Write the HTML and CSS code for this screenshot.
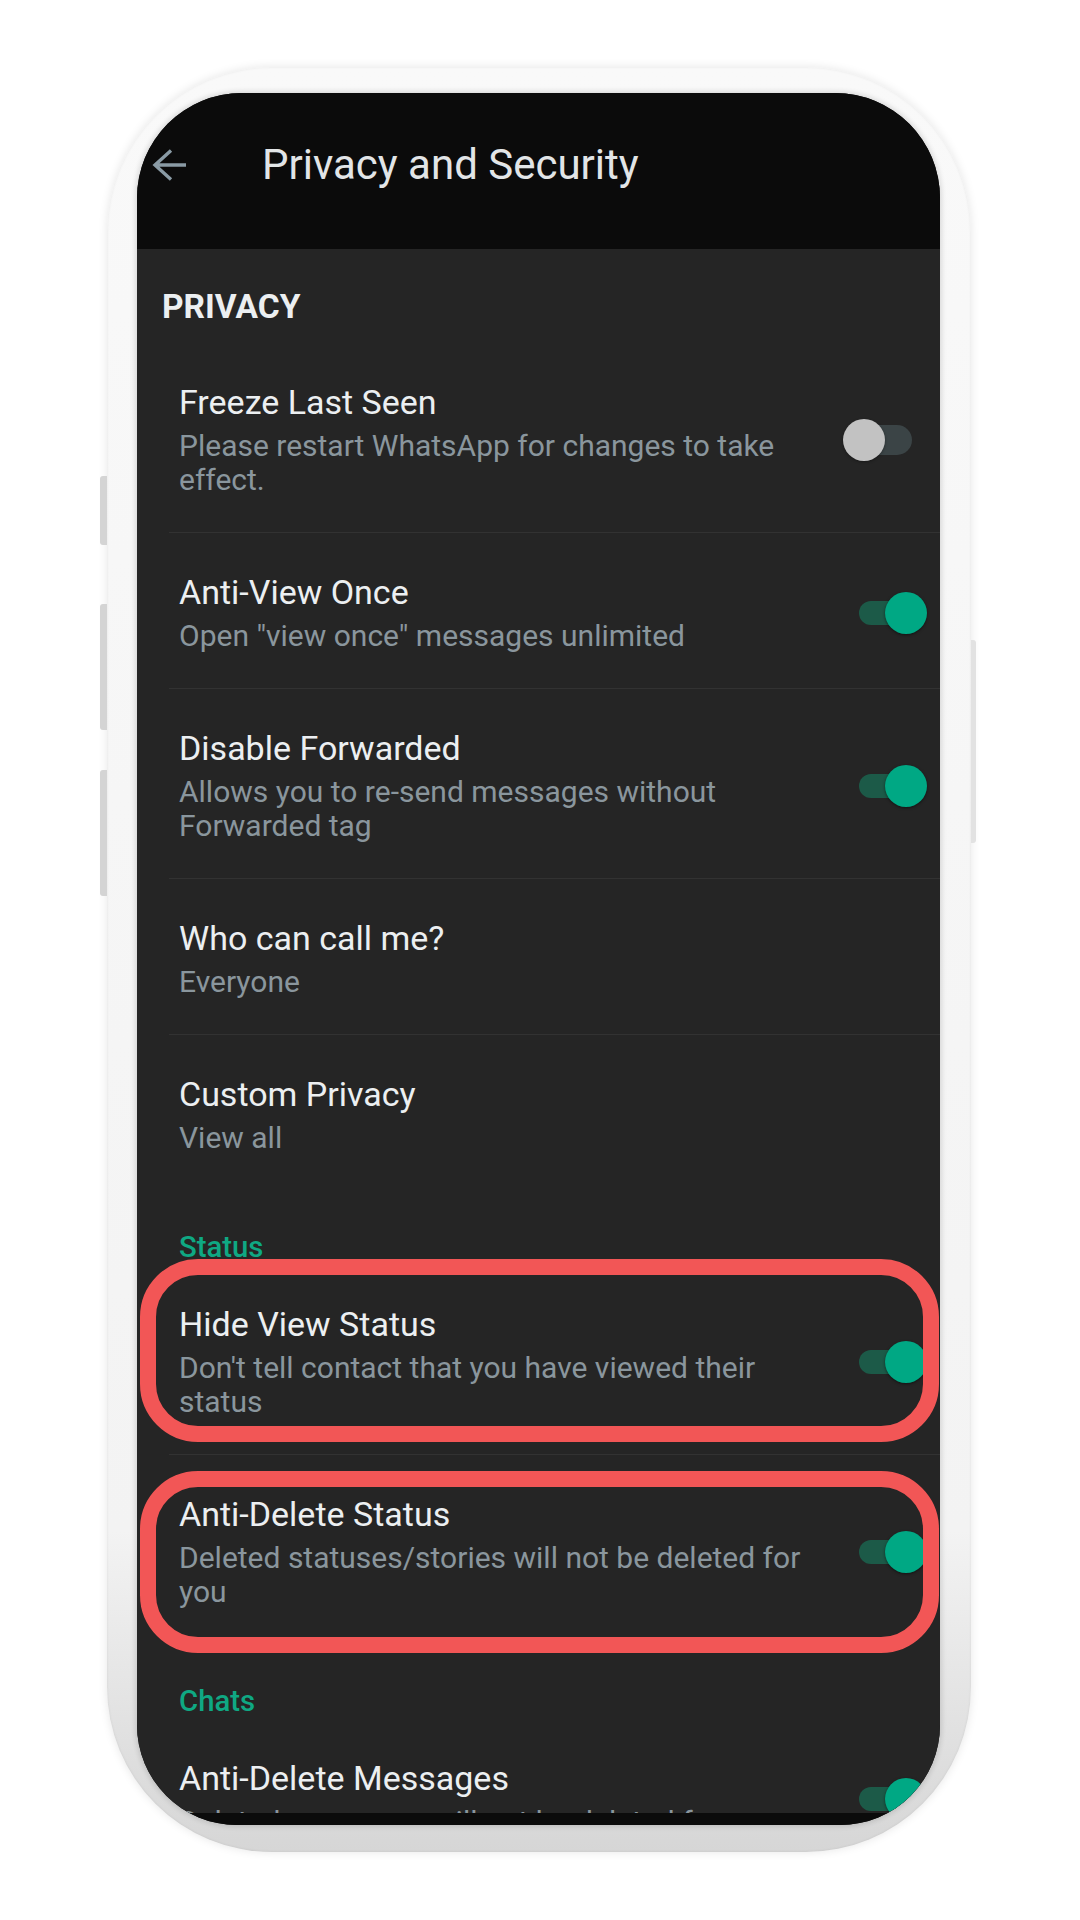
FILE: index.html
```html
<!DOCTYPE html>
<html lang="en">
<head>
<meta charset="utf-8">
<title>Privacy and Security</title>
<link rel="stylesheet" href="styles.css">
</head>
<body>
<div class="stage">
  <div class="phone">
    <span class="key key-l1"></span>
    <span class="key key-l2"></span>
    <span class="key key-l3"></span>
    <span class="key key-r1"></span>
    <div class="screen">
      <header class="appbar">
        <div class="bar">
          <svg class="back" viewBox="0 0 36 32" aria-hidden="true">
            <path d="M34 16H3 M19 1.5L3 16L19 30.5" fill="none" stroke="#8a9ba5" stroke-width="3.4" stroke-linecap="butt" stroke-linejoin="miter"/>
          </svg>
          <h1 class="title">Privacy and Security</h1>
        </div>
      </header>
      <main class="content">
        <h2 class="cat">PRIVACY</h2>
        <div class="list">
          <div class="row">
            <div class="text">
              <div class="t">Freeze Last Seen</div>
              <div class="s">Please restart WhatsApp for changes to take effect.</div>
            </div>
            <div class="switch off"><span class="track"></span><span class="thumb"></span></div>
          </div>
          <div class="row">
            <div class="text">
              <div class="t">Anti-View Once</div>
              <div class="s">Open "view once" messages unlimited</div>
            </div>
            <div class="switch on"><span class="track"></span><span class="thumb"></span></div>
          </div>
          <div class="row">
            <div class="text">
              <div class="t">Disable Forwarded</div>
              <div class="s">Allows you to re-send messages without Forwarded tag</div>
            </div>
            <div class="switch on"><span class="track"></span><span class="thumb"></span></div>
          </div>
          <div class="row">
            <div class="text">
              <div class="t">Who can call me?</div>
              <div class="s">Everyone</div>
            </div>
          </div>
          <div class="row last">
            <div class="text">
              <div class="t">Custom Privacy</div>
              <div class="s">View all</div>
            </div>
          </div>
        </div>

        <h3 class="sec">Status</h3>
        <div class="list">
          <div class="row">
            <div class="text">
              <div class="t">Hide View Status</div>
              <div class="s">Don't tell contact that you have viewed their status</div>
            </div>
            <div class="switch on"><span class="track"></span><span class="thumb"></span></div>
            <span class="mark mark-a"></span>
          </div>
          <div class="row last">
            <div class="text">
              <div class="t">Anti-Delete Status</div>
              <div class="s">Deleted statuses/stories will not be deleted for you</div>
            </div>
            <div class="switch on"><span class="track"></span><span class="thumb"></span></div>
            <span class="mark mark-b"></span>
          </div>
        </div>

        <h3 class="sec">Chats</h3>
        <div class="list">
          <div class="row last">
            <div class="text">
              <div class="t">Anti-Delete Messages</div>
              <div class="s">Deleted messages will not be deleted for you</div>
            </div>
            <div class="switch on"><span class="track"></span><span class="thumb"></span></div>
          </div>
        </div>
      </main>
      <div class="navbar"></div>
    </div>
  </div>
</div>
</body>
</html>
```
FILE: styles.css
```css
html, body {
  margin: 0;
  padding: 0;
  background: #ffffff;
}

body {
  font-family: Roboto, "Noto Sans", "Liberation Sans", sans-serif;
}

.stage {
  width: 1080px;
  height: 1920px;
  box-sizing: border-box;
  padding: 67px 0 0 107px;
}

.phone {
  position: relative;
  width: 864px;
  height: 1785px;
  box-sizing: border-box;
  padding: 26px 31px 27px 30px;
  border-radius: 165px;
  background: linear-gradient(180deg, #f9f9f9 0%, #f3f3f3 82%, #d6d6d6 100%);
  box-shadow: 0 0 10px rgba(0, 0, 0, 0.10), inset 0 0 3px rgba(0, 0, 0, 0.08);
}

.key {
  position: absolute;
  display: block;
  background: #d4d4d4;
}

.key-l1 { left: -7px; top: 409px; width: 7px; height: 69px; border-radius: 3px 0 0 3px; }
.key-l2 { left: -7px; top: 537px; width: 7px; height: 126px; border-radius: 3px 0 0 3px; }
.key-l3 { left: -7px; top: 703px; width: 7px; height: 126px; border-radius: 3px 0 0 3px; }
.key-r1 { right: -5px; top: 573px; width: 5px; height: 203px; border-radius: 0 3px 3px 0; background: #e2e2e2; }

.screen {
  height: 100%;
  display: flex;
  flex-direction: column;
  overflow: hidden;
  border-radius: 105px 105px 100px 100px;
  background: #0b0b0b;
  box-shadow: 0 0 5px 2px rgba(0, 0, 0, 0.12);
}

.appbar {
  flex: none;
  height: 156px;
  background: #0b0b0b;
}

.bar {
  height: 144px;
  display: flex;
  align-items: center;
  padding-left: 15px;
}

.back {
  flex: none;
  width: 36px;
  height: 32px;
}

.title {
  margin: 0 0 0 74px;
  font-size: 42px;
  font-weight: 400;
  line-height: 1;
  color: #e2e5e7;
}

.content {
  flex: 1;
  min-height: 0;
  overflow: hidden;
  background: #252525;
  padding-top: 38px;
}

.cat {
  margin: 0 0 16px 25px;
  font-size: 33.5px;
  font-weight: 700;
  line-height: 40px;
  color: #eceff1;
}

.list {
  padding-left: 32px;
}

.row {
  position: relative;
  display: flex;
  align-items: center;
  gap: 24px;
  padding: 39px 13px 35px 10px;
  border-bottom: 1px solid #323232;
}

.row.last {
  border-bottom: none;
}

.text {
  flex: 1;
  min-width: 0;
}

.t {
  font-size: 34px;
  line-height: 40px;
  color: #eceff1;
}

.s {
  margin-top: 7px;
  font-size: 30px;
  line-height: 34px;
  color: #8a969d;
}

.sec {
  margin: 40px 0 1px 42px;
  font-size: 29.3px;
  font-weight: 500;
  line-height: 34px;
  color: #0fa883;
}

.switch {
  position: relative;
  flex: none;
  width: 84px;
  height: 42px;
}

.track {
  position: absolute;
  display: block;
}

.thumb {
  position: absolute;
  display: block;
  top: 0;
  width: 42px;
  height: 42px;
  border-radius: 50%;
}

.switch.off .track {
  left: 12px;
  top: 6px;
  width: 57px;
  height: 30px;
  border-radius: 15px;
  background: #3b4446;
}

.switch.off .thumb {
  left: 0;
  background: #c2c2c2;
  box-shadow: 0 1px 3px rgba(0, 0, 0, 0.35);
}

.switch.on .track {
  left: 16px;
  top: 9px;
  width: 52px;
  height: 24px;
  border-radius: 12px;
  background: #1c5a48;
}

.switch.on .thumb {
  left: 42px;
  background: #00a884;
  box-shadow: 0 1px 3px rgba(0, 0, 0, 0.5);
}

.mark {
  position: absolute;
  display: block;
  left: -29px;
  right: 1px;
  box-sizing: border-box;
  border: 16px solid #f25656;
  border-radius: 58px;
  pointer-events: none;
}

.mark-a {
  top: -6px;
  height: 183px;
}

.mark-b {
  top: 16px;
  height: 182px;
}

.navbar {
  flex: none;
  height: 12px;
  background: #0b0b0b;
}
```
